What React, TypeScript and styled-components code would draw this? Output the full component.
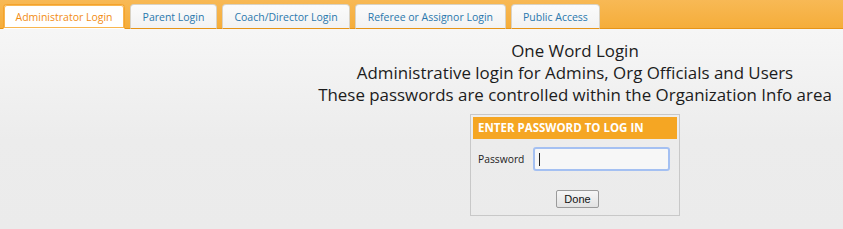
import React from 'react';
import styled, { createGlobalStyle } from 'styled-components';

const GlobalStyle = createGlobalStyle`
  html, body {
    margin: 0;
    padding: 0;
    height: 100%;
  }
  body {
    font-family: "Open Sans", "Liberation Sans", sans-serif;
    background: #ededed;
    color: #222;
  }
`;

const tabs = [
  'Administrator Login',
  'Parent Login',
  'Coach/Director Login',
  'Referee or Assignor Login',
  'Public Access',
];

const Page = styled.div`
  width: 843px;
  height: 229px;
  overflow: hidden;
  background: linear-gradient(#f6f6f6 30px, #ececec 140px, #ebebeb);
`;

const TabBar = styled.div`
  display: flex;
  align-items: flex-end;
  gap: 5px;
  height: 29px;
  padding-left: 3px;
  box-sizing: border-box;
  background: linear-gradient(#f8b955, #f5ad3a);
  border-bottom: 1px solid #e69417;
`;

const Tab = styled.div<{ active?: boolean }>`
  display: flex;
  align-items: center;
  height: 25px;
  margin-bottom: -1px;
  padding: 0 11.5px;
  box-sizing: border-box;
  font-size: 10.5px;
  border: 1px solid ${({ active }) => (active ? '#f4a32c' : '#d9d2c4')};
  border-bottom: ${({ active }) => (active ? '1px solid #fff' : '1px solid #e69417')};
  border-radius: 4px 4px 0 0;
  background: ${({ active }) => (active ? '#fff' : 'linear-gradient(#fbfbfb, #f2f2f2)')};
  color: ${({ active }) => (active ? '#f28c13' : '#2a78ad')};
  box-shadow: ${({ active }) => (active ? 'inset 0 0 0 1px #f8b650' : 'none')};
  white-space: nowrap;
`;

const Content = styled.div`
  padding-left: 307px;
  display: flex;
  flex-direction: column;
  align-items: center;
`;

const Intro = styled.div`
  margin-top: 11px;
  text-align: center;
  font-size: 16.9px;
  line-height: 22px;
  color: #1c1c1c;
`;

const LoginBox = styled.div`
  margin-top: 8px;
  width: 210px;
  box-sizing: border-box;
  border: 1px solid #c8c8c8;
  padding: 2px 2px 7px;
`;

const BoxHeader = styled.div`
  background: #f5a623;
  color: #fff;
  font-weight: bold;
  font-size: 11.5px;
  height: 22px;
  line-height: 22px;
  padding-left: 5px;
`;

const Field = styled.div`
  display: flex;
  align-items: center;
  margin-top: 8px;
  padding-left: 5px;
`;

const Label = styled.label`
  font-size: 10.3px;
  color: #222;
  width: 55px;
`;

const Input = styled.input`
  width: 137px;
  height: 24px;
  box-sizing: border-box;
  border: 2px solid #a4c0f2;
  border-radius: 3px;
  background: #f7f7f7;
  outline: none;
  padding: 0 5px;
  font-size: 12px;
`;

const Caret = styled.span`
  display: inline-block;
  width: 1px;
  height: 13px;
  background: #222;
`;

const InputWrap = styled.div`
  position: relative;
  display: flex;
  align-items: center;
  & > ${Caret} {
    position: absolute;
    left: 6px;
  }
`;

const Actions = styled.div`
  display: flex;
  justify-content: center;
  margin-top: 19px;
  padding-left: 5px;
`;

const Button = styled.button`
  font-family: "Liberation Sans", Arial, sans-serif;
  font-size: 11px;
  color: #111;
  height: 18px;
  padding: 0 7px;
  border: 1px solid #9a9a9a;
  border-radius: 2px;
  background: linear-gradient(#f6f6f6, #e2e2e2);
`;

export default function App() {
  return (
    <Page>
      <GlobalStyle />
      <TabBar>
        {tabs.map((t, i) => (
          <Tab key={t} active={i === 0}>
            {t}
          </Tab>
        ))}
      </TabBar>
      <Content>
        <Intro>
          One Word Login
          <br />
          Administrative login for Admins, Org Officials and Users
          <br />
          These passwords are controlled within the Organization Info area
        </Intro>
        <LoginBox>
          <BoxHeader>ENTER PASSWORD TO LOG IN</BoxHeader>
          <Field>
            <Label>Password</Label>
            <InputWrap>
              <Input type="password" />
              <Caret />
            </InputWrap>
          </Field>
          <Actions>
            <Button>Done</Button>
          </Actions>
        </LoginBox>
      </Content>
    </Page>
  );
}
